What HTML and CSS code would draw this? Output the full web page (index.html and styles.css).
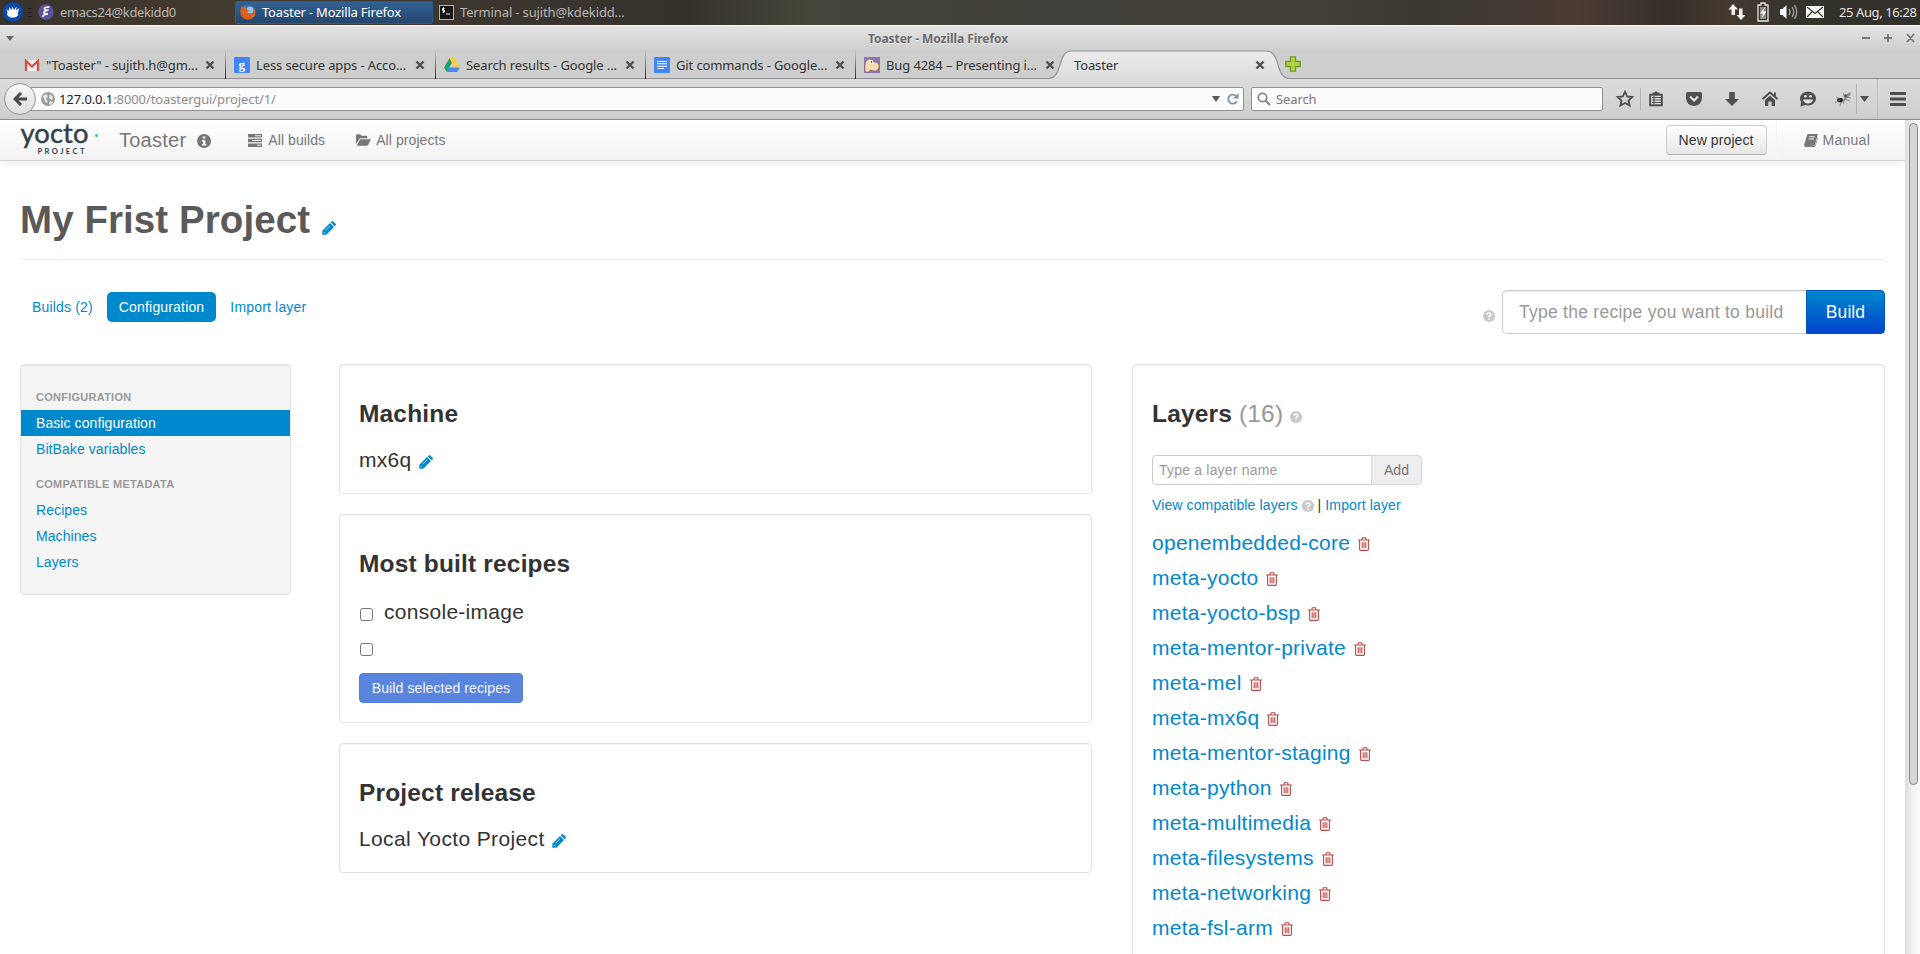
FILE: index.html
```html
<!DOCTYPE html>
<html lang="en">
<head>
    <meta charset="UTF-8">
    <title>Toaster</title>
    <link rel="stylesheet" href="styles.css">
</head>
<body>
    <!-- shared icons -->
    <svg class="sprite" width="0" height="0">
        <symbol id="pencil" viewBox="0 0 14 14">
            <path d="M.3 13.700v-4L8 2l4 4-7.700 7.700zM8.700 1.300L9.600.4q.8-.7 1.600 0L13.600 2.800q.7.8 0 1.600l-.9.900z"/>
            <path d="M1.500 10.800l1.700 1.700M3.600 9.200L8 4.800" stroke="#fff" stroke-width=".7"/>
        </symbol>
        <symbol id="trash" viewBox="0 0 12 14">
            <path d="M0 3h12M3.700 3l.6-2.200h3.400L8.300 3M1.600 3v9q0 1.400 1 1.400h6.800q1 0 1-1.400V3M4.200 5.200v6M6 5.200v6M7.800 5.200v6" fill="none" stroke="currentColor" stroke-width="1.100"/>
        </symbol>
        <symbol id="help" viewBox="0 0 12 12">
            <circle cx="6" cy="6" r="6"/>
            <path d="M4 4.600Q4.100 2.900 6 2.900t2 1.600Q8 5.500 6.800 6 6 6.400 6 7.200M6 8.200v1.500" fill="none" stroke="#fff" stroke-width="1.500"/>
        </symbol>
        <symbol id="close" viewBox="0 0 10 10">
            <path d="M1.500 1.500l7 7M8.500 1.500l-7 7" stroke="#505050" stroke-width="2.400"/>
        </symbol>
    </svg>

    <div class="panel">
        <svg class="xfce" width="20" height="20" viewBox="0 0 20 20"><circle cx="10" cy="10" r="10" fill="#0b4aa8"/><path d="M3.500 7l2.300 1.800L6.500 5l1.800 3.200L9.700 4.500l1.200 3.700L13.500 4.500l-.3 4 3.300-2.500-1.500 4.500q1 4-3.500 5H7.500Q3 14 4.500 10z" fill="#fff"/></svg>
        <span class="grip"></span>
        <div class="task emacs">
            <svg width="16" height="16" viewBox="0 0 16 16"><circle cx="8" cy="8" r="7.800" fill="#5b529e"/><path d="M11.500 3Q6 3 6.500 5t4 1Q5 7.500 6 9t4 1q-5 .6-5.500 3" fill="none" stroke="#fff" stroke-width="1.700"/></svg>
            <span>emacs24@kdekidd0</span>
        </div>
        <div class="task active">
            <svg width="16" height="16" viewBox="0 0 16 16"><circle cx="8" cy="8" r="7.500" fill="#2b6fb5"/><circle cx="10" cy="6" r="3.500" fill="#8cc8ee"/><path d="M1 2l2 1.500Q5 2 7 3 5 4 7 5.500l3 1.500-3 1q1 3 4.500 2Q14.500 9 14 4q3 5 0 8.500-3 3.500-7 3Q-.5 14 .5 6z" fill="#e2601c"/><path d="M14 4q2.500 6-2.500 9.500Q16.500 11 14 4z" fill="#f8c13c"/></svg>
            <span>Toaster - Mozilla Firefox</span>
        </div>
        <div class="task terminal">
            <svg width="15" height="15" viewBox="0 0 15 15"><rect x=".5" y=".5" width="14" height="14" fill="#161616" stroke="#b5b5b0"/><path d="M5.500 3.500h-2v1.800h2v1.800h-2M4.500 2.500v5.500M7 9h4" fill="none" stroke="#eee"/></svg>
            <span>Terminal - sujith@kdekidd...</span>
        </div>
        <div class="tray">
            <svg width="18" height="18" viewBox="0 0 18 18"><path d="M5 1l5 5.500H7V12H3.500V6.500H.5zM13 17l-4.500-5H11V5.500h3.500V12h3z"/></svg>
            <svg width="18" height="20" viewBox="0 0 18 20"><path d="M7 1h4v2h3v16H4V3h3z" fill="none" stroke="#e8e8e8" stroke-width="1.300"/><path d="M6 5h6v12H6z" fill="#8b8b87"/><path d="M11 5l-5 6.500h3L7.500 17l5-7.500H9.500z"/></svg>
            <svg width="18" height="16" viewBox="0 0 18 16"><path d="M0 5h2.500L6.500 1v14l-4-4H0z"/><path d="M9 5q2 3 0 6M12 3q3.500 5 0 10M14.500 1q4.500 7 0 14" fill="none" stroke="#999" stroke-width="1.400"/></svg>
            <svg width="18" height="14" viewBox="0 0 18 14"><path d="M0 1h18v12H0z"/><path d="M1 2l8 6.500L17 2M1 12l5.500-5.500M17 12l-5.500-5.500" fill="none" stroke="#3a3833" stroke-width="1.200"/></svg>
        </div>
        <span class="clock">25 Aug, 16:28</span>
    </div>

    <div class="titlebar">
        <svg class="menu-arrow" width="8" height="5" viewBox="0 0 8 5"><path d="M0 0h8L4 5z" fill="#666"/></svg>
        <span class="title">Toaster - Mozilla Firefox</span>
        <svg class="controls" width="54" height="10" viewBox="0 0 54 10"><path d="M0 5h8M22 5h8M26 1v8M45 1l7 8M52 1l-7 8" fill="none" stroke="#777" stroke-width="1.800"/></svg>
    </div>

    <div class="tabs">
        <div class="tab">
            <svg width="16" height="16" viewBox="0 0 16 16"><path d="M1 3h14v11H1z" fill="#eee"/><path d="M2 14V4l6 5.500L14 4v10" fill="none" stroke="#d54b3d" stroke-width="2.200"/></svg>
            <span>"Toaster" - sujith.h@gm...</span>
            <svg class="close" width="10" height="10"><use href="#close"/></svg>
        </div>
        <div class="tab">
            <svg width="16" height="16" viewBox="0 0 16 16"><rect width="16" height="16" rx="1" fill="#4285f4"/><text x="4.500" y="11.500" class="favicon-g">g</text></svg>
            <span>Less secure apps - Acco...</span>
            <svg class="close" width="10" height="10"><use href="#close"/></svg>
        </div>
        <div class="tab">
            <svg width="16" height="16" viewBox="0 0 16 16"><path d="M5.500 1L0 10.500 2.700 15 8 5.500z" fill="#1da362"/><path d="M5.500 1h5L16 10.500h-5.300z" fill="#fc4"/><path d="M5.300 10.500H16L13.300 15H2.700z" fill="#4688f4"/></svg>
            <span>Search results - Google ...</span>
            <svg class="close" width="10" height="10"><use href="#close"/></svg>
        </div>
        <div class="tab">
            <svg width="16" height="16" viewBox="0 0 16 16"><rect width="16" height="16" rx="1" fill="#4285f4"/><path d="M3 4.500h10M3 6.800h10M3 9.200h10M3 11.500h7" stroke="#fff" stroke-width="1.100"/></svg>
            <span>Git commands - Google...</span>
            <svg class="close" width="10" height="10"><use href="#close"/></svg>
        </div>
        <div class="tab last">
            <svg width="16" height="16" viewBox="0 0 16 16"><rect width="16" height="16" fill="#8d74b4"/><path d="M1 14V8q0-5 4-6 4-.5 5 3 5 0 5 4 0 5-5 5l-4-1-1 2H2z" fill="#f6dcb0" stroke="#7b5b3c" stroke-width=".6"/><circle cx="7" cy="5" r="2" fill="#fff"/><circle cx="7.500" cy="5" r=".8"/></svg>
            <span>Bug 4284 – Presenting i...</span>
            <svg class="close" width="10" height="10"><use href="#close"/></svg>
        </div>
        <div class="tab current">
            <svg class="tab-shape" width="244" height="30" viewBox="0 0 244 30">
                <defs><linearGradient id="tabfill" x2="0" y2="1"><stop offset="0" stop-color="#ececec"/><stop offset="1" stop-color="#dcdcdc"/></linearGradient></defs>
                <path d="M0 28.500C16 28.500 8 1 24 1H218C234 1 226 28.500 242 28.500V30H0z" fill="url(#tabfill)"/>
                <path d="M0 28.500C16 28.500 8 1 24 1H218C234 1 226 28.500 242 28.500" fill="none" stroke="#8f979f" stroke-width="1.200"/>
            </svg>
            <span>Toaster</span>
            <svg class="close" width="10" height="10"><use href="#close"/></svg>
        </div>
        <svg class="new-tab" width="16" height="16" viewBox="0 0 16 16"><path d="M5.500.8h5v4.700h4.700v5h-4.700v4.700h-5v-4.700H.8v-5h4.700z" fill="#b4d143" stroke="#6d9a26" stroke-width="1.300"/></svg>
    </div>

    <div class="toolbar">
        <div class="back"><svg width="14" height="14" viewBox="0 0 14 14"><path d="M8 1L2 7l6 6M2.500 7H14" fill="none" stroke="#4a4a4a" stroke-width="3"/></svg></div>
        <div class="url">
            <svg width="14" height="14" viewBox="0 0 14 14"><circle cx="7" cy="7" r="7" fill="#9b9b9b"/><path d="M2 4l3-2 2 2-2 3 2 3-2 1-2-4zM9 2l3 3-1 3-3-2zM9 9l3 1-2 3-2-1z" fill="#e8e8e8"/></svg>
            <span class="address"><b>127.0.0.1</b>:8000/toastergui/project/1/</span>
            <svg width="8" height="6" viewBox="0 0 8 6"><path d="M0 0h8L4 6z" fill="#555"/></svg>
            <svg class="reload" width="12" height="12" viewBox="0 0 12 12"><path d="M9.800 8.200A4.500 4.500 0 1 1 9 3" fill="none" stroke="#8494a4" stroke-width="1.900"/><path d="M11.600 0v5.500H6.200z" fill="#8494a4"/></svg>
        </div>
        <div class="search">
            <svg width="14" height="14" viewBox="0 0 14 14"><circle cx="5.500" cy="5.500" r="4.200" fill="none" stroke="#888" stroke-width="1.800"/><path d="M8.500 8.500L13 13" stroke="#888" stroke-width="2.200"/></svg>
            <span>Search</span>
        </div>
        <div class="tools">
            <svg width="30" height="18" viewBox="-15 -9 30 18"><path d="M0-7.300L2.200-2.500 7.300-2 3.500 1.500 4.600 6.600 0 4-4.600 6.600-3.500 1.500-7.300-2-2.200-2.500z" fill="none" stroke="#4d4d4d" stroke-width="1.800"/></svg>
            <span class="sep"></span>
            <svg class="clip" width="30" height="18" viewBox="-15 -9 30 18"><path d="M-5.800-4.300H5.800V6.300H-5.800z" fill="#e5e5e5" stroke="#4d4d4d" stroke-width="2"/><path d="M-3.500-5V-6.500H-1.500L0-8 1.500-6.500H3.500V-5z" fill="#4d4d4d"/><path d="M-4-1.500H5M-4 1H5M-4 3.500H5M-2-3V5" stroke="#4d4d4d" stroke-width="1.100"/></svg>
            <svg width="38" height="18" viewBox="-19 -9 38 18"><path d="M-8-5.500Q-8-7-6.500-7H6.500Q8-7 8-5.500V-1Q7.500 6.500 0 7-7.500 6.500-8-1z"/><path d="M-4-2.500L0 1.500 4-2.500" fill="none" stroke="#e2e2e2" stroke-width="2.200"/></svg>
            <svg width="38" height="18" viewBox="-19 -9 38 18"><path d="M-2.800-7H2.800V0H7L0 7-7 0H-2.800z"/></svg>
            <svg width="38" height="18" viewBox="-19 -9 38 18"><path d="M-7.500 0L0-6.500 7.500 0M5-6.500V-2" fill="none" stroke="#4d4d4d" stroke-width="1.900"/><path d="M-5 1L0-3.300 5 1V7H1.700V2.500H-1.700V7H-5z"/></svg>
            <svg width="38" height="18" viewBox="-19 -9 38 18"><ellipse cy="-.5" rx="8" ry="7"/><path d="M-7 3L-7.500 7.500-1 5.500z"/><path d="M-5 .5H5Q4 4.500 0 4.500T-5 .5z" fill="#e2e2e2"/><circle cx="-2.500" cy="-2.800" r="1.300" fill="#e2e2e2"/><circle cx="2.500" cy="-2.800" r="1.300" fill="#e2e2e2"/></svg>
            <svg width="28" height="18" viewBox="-16 -9 28 18"><path d="M-5 1l3-2 3 1 2-4 4-3 1 3-4 3-2 3-4 2z" fill="#999"/><ellipse cx="-3" cy="1" rx="2.800" ry="2.300" fill="#222"/><circle cx="2.500" cy="-3" r="1.800" fill="#555"/><path d="M-7-2l4 2M-8 4l5-3M-3 7l1-4M1 5l-1-3M7 2L1 0M0-6l2 4M7-6l-3 2M8-1L3-2" stroke="#777" stroke-width=".8"/></svg>
            <span class="sep thin"></span>
            <svg class="drop" width="9" height="6" viewBox="0 0 9 6"><path d="M0 0h9L4.500 6z"/></svg>
            <span class="sep tall"></span>
            <svg class="burger" width="16" height="14" viewBox="0 0 16 14"><path d="M1 1.500h14M1 7h14M1 12.500h14" stroke="#4d4d4d" stroke-width="2.800" stroke-linecap="round"/></svg>
        </div>
    </div>

    <div class="viewport">
        <div class="page">
            <div class="navbar">
                <svg class="logo" width="84" height="40" viewBox="0 0 84 40">
                    <text x="0.500" y="22.500" textLength="68" lengthAdjust="spacingAndGlyphs" class="logo-name">yocto</text>
                    <text x="17.500" y="33.500" textLength="47" class="logo-sub">PROJECT</text>
                    <circle cx="76.500" cy="15.500" r="1.500" fill="#4ba3e3"/>
                </svg>
                <span class="brand">Toaster</span>
                <svg class="info" width="14" height="14" viewBox="0 0 14 14"><circle cx="7" cy="7" r="7"/><path d="M5.800 2.500h2.500v2H5.800zM5 6h3.300v4H9.300v1.500H5V10h1V7.500H5z" fill="#fff"/></svg>
                <a class="nav-link builds"><svg width="14" height="13" viewBox="0 0 14 13"><path d="M0 0h14v3.600H0zM0 4.700h14v3.600H0zM0 9.400h14V13H0z"/><path d="M7 1.800h6M4 6.500h9M9 11.200h4" stroke="#f8f8f8" stroke-width="1"/></svg>All builds</a>
                <a class="nav-link projects"><svg width="15" height="12" viewBox="0 0 15 12"><path d="M0 10V1.500Q0 .3 1 .3h3.300l1 1.500H10q1.300 0 1.300 1.200v1.200H4L0 10zM.7 11.700L4.200 5.200H15l-3.500 6.500z"/></svg>All projects</a>
                <button class="new-project">New project</button>
                <span class="divider"></span>
                <a class="nav-link manual"><svg width="14" height="13" viewBox="0 0 14 13"><path d="M4.200 0H13q1 0 .7 1L11 10.500q-.4 1-1.500 1H2l9 .3L13.800 3v1.500L11.500 12q-.4 1-1.500 1H1.500Q-.3 12.500.2 10.500L3 1Q3.400 0 4.200 0z"/><path d="M5.200 2.800h5.500M4.500 5h5.500" stroke="#f8f8f8"/></svg>Manual</a>
            </div>

            <div class="content">
                <h1>My Frist Project <svg class="edit" width="14" height="14"><use href="#pencil"/></svg></h1>

                <div class="actions">
                    <ul class="pills">
                        <li>Builds (2)</li>
                        <li class="active">Configuration</li>
                        <li>Import layer</li>
                    </ul>
                    <form class="build-form">
                        <svg class="help" width="12" height="12"><use href="#help"/></svg>
                        <input type="text" placeholder="Type the recipe you want to build">
                        <button type="button">Build</button>
                    </form>
                </div>

                <div class="columns">
                    <ul class="sidebar">
                        <li class="header">CONFIGURATION</li>
                        <li class="active">Basic configuration</li>
                        <li>BitBake variables</li>
                        <li class="header">COMPATIBLE METADATA</li>
                        <li>Recipes</li>
                        <li>Machines</li>
                        <li>Layers</li>
                    </ul>

                    <div class="main">
                        <div class="well">
                            <h3>Machine</h3>
                            <p class="lead">mx6q <svg class="edit" width="14" height="14"><use href="#pencil"/></svg></p>
                        </div>
                        <div class="well">
                            <h3>Most built recipes</h3>
                            <label class="recipe"><input type="checkbox">console-image</label>
                            <label class="recipe"><input type="checkbox"></label>
                            <button class="build-selected">Build selected recipes</button>
                        </div>
                        <div class="well">
                            <h3>Project release</h3>
                            <p class="lead release">Local Yocto Project <svg class="edit" width="14" height="14"><use href="#pencil"/></svg></p>
                        </div>
                    </div>

                    <div class="well layers">
                        <h3>Layers <span class="count">(16)</span> <svg class="help" width="12" height="12"><use href="#help"/></svg></h3>
                        <form class="add-layer">
                            <input type="text" placeholder="Type a layer name">
                            <button type="button">Add</button>
                        </form>
                        <p class="links"><a>View compatible layers</a> <svg class="help" width="12" height="12"><use href="#help"/></svg> | <a>Import layer</a></p>
                        <ul class="layer-list">
                            <li>openembedded-core<svg width="12" height="14"><use href="#trash"/></svg></li>
                            <li>meta-yocto<svg width="12" height="14"><use href="#trash"/></svg></li>
                            <li>meta-yocto-bsp<svg width="12" height="14"><use href="#trash"/></svg></li>
                            <li>meta-mentor-private<svg width="12" height="14"><use href="#trash"/></svg></li>
                            <li>meta-mel<svg width="12" height="14"><use href="#trash"/></svg></li>
                            <li>meta-mx6q<svg width="12" height="14"><use href="#trash"/></svg></li>
                            <li>meta-mentor-staging<svg width="12" height="14"><use href="#trash"/></svg></li>
                            <li>meta-python<svg width="12" height="14"><use href="#trash"/></svg></li>
                            <li>meta-multimedia<svg width="12" height="14"><use href="#trash"/></svg></li>
                            <li>meta-filesystems<svg width="12" height="14"><use href="#trash"/></svg></li>
                            <li>meta-networking<svg width="12" height="14"><use href="#trash"/></svg></li>
                            <li>meta-fsl-arm<svg width="12" height="14"><use href="#trash"/></svg></li>
                        </ul>
                    </div>
                </div>
            </div>
        </div>
        <div class="scrollbar"><div class="thumb"></div></div>
    </div>
</body>
</html>
```

FILE: styles.css
```css
* {
    box-sizing: border-box;
}
body {
    margin: 0;
    height: 954px;
    overflow: hidden;
    display: flex;
    flex-direction: column;
    font-family: "Noto Sans", sans-serif;
    font-size: 13px;
    background-color: #fff;
}
svg {
    flex: none;
}
ul {
    list-style: none;
    margin: 0;
    padding: 0;
}
.sprite {
    position: absolute;
}

/* desktop panel */
.panel {
    height: 25px;
    flex: none;
    display: flex;
    align-items: center;
    padding-bottom: 1px;
    color: #b8b6b1;
    background: linear-gradient(90deg, #37322c, #443b2e 12%, #3c362f 22%, #35322b 36%, #45463a 42%, #42403a 55%, #45413a 68%, #3a3731 74%, #493c34 82%, #352f29 87%, #45392f 90%, #33322b 94%, #31302a);
}
.xfce {
    margin-left: 3px;
}
.grip {
    width: 4px;
    height: 9px;
    margin: 0 6px 0 5px;
    background: repeating-linear-gradient(#222 0 1px, transparent 1px 4px);
}
.task {
    display: flex;
    align-items: center;
    width: 198px;
    height: 23px;
    padding-left: 5px;
    white-space: nowrap;
}
.task span {
    margin-left: 6px;
}
.task.emacs {
    width: 197px;
    padding-left: 0;
    letter-spacing: -0.37px;
}
.task.active {
    padding-left: 4px;
    margin-right: 1px;
    color: #fff;
    background: linear-gradient(#336194, #24466d);
    border: 1px solid #2a5c96;
    border-radius: 2px;
    letter-spacing: -0.2px;
}
.task.terminal {
    letter-spacing: -0.14px;
}
.tray {
    display: flex;
    align-items: center;
    gap: 8px;
    margin-left: auto;
    fill: #f4f4f4;
}
.clock {
    width: 96px;
    padding-left: 15px;
    color: #e5e5e5;
    white-space: nowrap;
    letter-spacing: -0.4px;
}

/* browser window */
.titlebar {
    height: 25px;
    flex: none;
    display: flex;
    align-items: center;
    background: linear-gradient(#e3e3e3, #cfcfcf);
    border-top: 1px solid #f7f7f7;
    font-size: 12px;
    font-weight: bold;
    color: #6a6a6a;
}
.menu-arrow {
    margin-left: 6px;
}
.title {
    margin-left: 854px;
    text-shadow: 0 1px #eee;
    letter-spacing: -0.06px;
}
.controls {
    margin-left: auto;
    margin-right: 4px;
}
.tabs {
    height: 29px;
    flex: none;
    display: flex;
    padding-left: 16px;
    background-color: #cecece;
    box-shadow: inset 0 -1px #8f8f8f;
    color: #333;
}
.tab {
    position: relative;
    display: flex;
    align-items: center;
    width: 210px;
    padding: 0 10px 0 8px;
    border-right: 1px solid;
    border-image: linear-gradient(#cecece, #222) 1;
    white-space: nowrap;
    letter-spacing: -0.12px;
}
.tab span {
    margin-left: 6px;
}
.tab .close {
    margin-left: auto;
}
.tab.last {
    border: 0;
    padding-right: 11px;
}
.tab.current {
    border: 0;
    width: 215px;
    padding-right: 16px;
}
.tab.current span {
    position: relative;
    margin-left: 0;
}
.tab.current .close {
    position: relative;
}
.tab-shape {
    position: absolute;
    left: -18px;
    top: 0;
}
.favicon-g {
    font: bold 13px "Liberation Serif", serif;
    fill: #fff;
}
.new-tab {
    margin: 6px 0 0 4px;
}
.toolbar {
    height: 41px;
    flex: none;
    display: flex;
    align-items: center;
    background: linear-gradient(#dcdcdc, #cecece);
    border-bottom: 1px solid #8c8c8c;
}
.back {
    position: relative;
    z-index: 1;
    width: 32px;
    height: 32px;
    margin-left: 4px;
    display: flex;
    align-items: center;
    justify-content: center;
    background: linear-gradient(#f7f7f7, #dedede);
    border: 1px solid #8d97a3;
    border-radius: 50%;
}
.url, .search {
    display: flex;
    align-items: center;
    height: 24px;
    background-color: #fcfcfc;
    border: 1px solid #909090;
    border-radius: 2px;
}
.url {
    width: 1223px;
    margin-left: -15px;
    padding: 0 4px 0 19px;
}
.address {
    flex: 1;
    margin-left: 4px;
    color: #8c8c8c;
    letter-spacing: -0.1px;
}
.address b {
    font-weight: normal;
    color: #222;
}
.reload {
    margin-left: 7px;
}
.search {
    width: 352px;
    margin-left: 7px;
    padding-left: 5px;
    color: #777;
    letter-spacing: -0.1px;
}
.search span {
    margin-left: 5px;
}
.tools {
    display: flex;
    align-items: center;
    margin-left: 7px;
    fill: #505050;
}
.sep {
    width: 1px;
    height: 22px;
    background-color: #aeb3b8;
}
.clip {
    margin-right: 4px;
}
.sep.thin {
    height: 30px;
    margin-left: 1px;
}
.sep.tall {
    height: 40px;
    margin-left: 8px;
    background-color: #bdbdbd;
}
.drop {
    margin-left: 3px;
}
.burger {
    margin-left: 12px;
}

/* toaster page */
.viewport {
    flex: 1;
    min-height: 0;
    display: flex;
    overflow: hidden;
    font-family: "Liberation Sans", Arial, sans-serif;
    font-size: 14px;
    line-height: 20px;
    letter-spacing: 0.08px;
    color: #333;
}
.page {
    flex: 1;
}
.scrollbar {
    width: 15px;
    padding: 3px 3px 0 4px;
    background: linear-gradient(90deg, #dcdcdc, #f3f3f3 50%, #fafafa);
}
.thumb {
    height: 662px;
    width: 9px;
    background-color: #d6d6d6;
    border: 1px solid #888;
    border-radius: 5px;
}
.navbar {
    display: flex;
    align-items: center;
    height: 41px;
    padding-left: 20px;
    background: linear-gradient(#fff, #f2f2f2);
    border-bottom: 1px solid #d4d4d4;
    box-shadow: 0 1px 10px rgba(0, 0, 0, 0.1);
    color: #777;
}
.logo {
    overflow: visible;
}
.logo-name {
    font: 26px Lato, sans-serif;
    fill: #333f4b;
    stroke: #333f4b;
    stroke-width: 0.4px;
}
.logo-sub {
    font: bold 7.5px Lato, sans-serif;
    fill: #333f4b;
}
.brand {
    margin-left: 15px;
    font-size: 20px;
    letter-spacing: 0.25px;
}
.info {
    margin: 2px 0 0 11px;
    fill: #777;
}
.nav-link {
    display: flex;
    align-items: center;
    gap: 6px;
    fill: #777;
}
.builds {
    margin-left: 37px;
}
.projects {
    margin-left: 31px;
    gap: 5px;
}
.new-project {
    width: 101px;
    height: 30px;
    margin-left: auto;
    padding: 0;
    font: 14px "Liberation Sans", Arial, sans-serif;
    letter-spacing: 0.1px;
    color: #333;
    background: linear-gradient(#fff, #e6e6e6);
    border: 1px solid #ccc;
    border-bottom-color: #b3b3b3;
    border-radius: 4px;
}
.divider {
    width: 2px;
    height: 40px;
    margin-left: 9px;
    background-color: #f2f2f2;
    border-right: 1px solid #fff;
}
.manual {
    margin: 0 35px 0 26px;
    gap: 5px;
    letter-spacing: 0.25px;
}
.content {
    padding: 39px 20px 0;
}
h1 {
    height: 60px;
    margin: 0 0 30px;
    padding-bottom: 20px;
    border-bottom: 1px solid #eee;
    font-size: 38.5px;
    line-height: 40px;
    color: #5a5a5a;
}
.edit {
    fill: #08c;
}
h1 .edit {
    margin-left: 1px;
    vertical-align: -2px;
}
.lead .edit {
    margin-left: 1px;
    vertical-align: -2px;
}
.help {
    fill: #c8c8c8;
}
.actions {
    display: flex;
    justify-content: space-between;
    height: 74px;
}
.pills {
    display: flex;
    gap: 2px;
    margin-top: 2px;
    color: #08c;
    letter-spacing: 0.17px;
}
.pills li {
    height: 30px;
    padding: 5px 12px;
    border-radius: 5px;
}
.pills .active {
    color: #fff;
    background-color: #08c;
}
.build-form {
    display: flex;
    height: 44px;
}
.build-form .help {
    margin: 20px 7px 0 0;
}
.build-form input {
    width: 304px;
    padding: 0 0 0 16px;
    font: 17.5px "Liberation Sans", Arial, sans-serif;
    letter-spacing: 0.26px;
    border: 1px solid #ccc;
    border-right: 0;
    border-radius: 5px 0 0 5px;
    box-shadow: inset 0 1px 1px rgba(0, 0, 0, 0.08);
}
input::placeholder {
    color: #999;
}
.build-form button {
    width: 79px;
    padding: 0;
    font: 17.5px "Liberation Sans", Arial, sans-serif;
    letter-spacing: 0.1px;
    color: #fff;
    background: linear-gradient(#08c, #04c);
    border: 1px solid #0256b8;
    border-radius: 0 4px 4px 0;
}
.columns {
    display: flex;
    align-items: flex-start;
}
.sidebar {
    width: 271px;
    padding: 19px 0;
    background-color: #f5f5f5;
    border: 1px solid #e3e3e3;
    border-radius: 4px;
    box-shadow: inset 0 1px 1px rgba(0, 0, 0, 0.05);
    color: #08c;
}
.sidebar li {
    padding: 3px 15px;
}
.sidebar .active {
    color: #fff;
    background-color: #08c;
}
.sidebar .header {
    font-size: 11px;
    font-weight: bold;
    letter-spacing: 0.26px;
    color: #999;
}
.sidebar li + .header {
    margin-top: 9px;
}
.main {
    width: 753px;
    margin-left: 48px;
}
.well {
    padding: 19px;
    margin-bottom: 20px;
    border: 1px solid #e3e3e3;
    border-radius: 4px;
    box-shadow: inset 0 1px 1px rgba(0, 0, 0, 0.05);
}
h3 {
    margin: 10px 0;
    font-size: 24.5px;
    line-height: 40px;
    letter-spacing: 0.17px;
}
.lead {
    height: 30px;
    margin: 0;
    padding-top: 1px;
    font-size: 21px;
    line-height: 30px;
    letter-spacing: 0.26px;
}
.release {
    letter-spacing: 0.37px;
}
.recipe {
    display: flex;
    align-items: center;
    height: 35px;
    font-size: 21px;
    letter-spacing: 0.28px;
}
.recipe input {
    width: 13px;
    height: 13px;
    margin: 6px 11px 0 1px;
}
.build-selected {
    display: block;
    width: 164px;
    height: 30px;
    margin-top: 9px;
    padding: 0;
    font: 14px "Liberation Sans", Arial, sans-serif;
    letter-spacing: 0.1px;
    color: #f3f6fd;
    background-color: #5a85de;
    border: 1px solid #557fd2;
    border-radius: 4px;
}
.layers {
    width: 753px;
    height: 700px;
    margin-left: 40px;
}
.count {
    font-weight: normal;
    color: #999;
}
.layers h3 .help {
    vertical-align: -1px;
}
.add-layer {
    display: flex;
    height: 30px;
    margin-top: 21px;
}
.add-layer input {
    width: 220px;
    padding: 0 6px;
    font: 14px "Liberation Sans", Arial, sans-serif;
    letter-spacing: 0.2px;
    border: 1px solid #ccc;
    border-radius: 4px 0 0 4px;
}
.add-layer button {
    width: 51px;
    margin-left: -1px;
    padding: 0;
    font: 14px "Liberation Sans", Arial, sans-serif;
    color: #777;
    background-color: #eee;
    border: 1px solid #d8d8d8;
    border-radius: 0 4px 4px 0;
}
.links {
    margin: 10px 0 15px;
    letter-spacing: 0.12px;
}
.links a {
    color: #08c;
}
.links .help {
    vertical-align: -2px;
}
.layer-list li {
    display: flex;
    align-items: center;
    height: 25px;
    margin-bottom: 10px;
    font-size: 21px;
    letter-spacing: 0.26px;
    color: #08c;
}
.layer-list svg {
    margin: 3px 0 0 8px;
    color: #b94a48;
}
```
